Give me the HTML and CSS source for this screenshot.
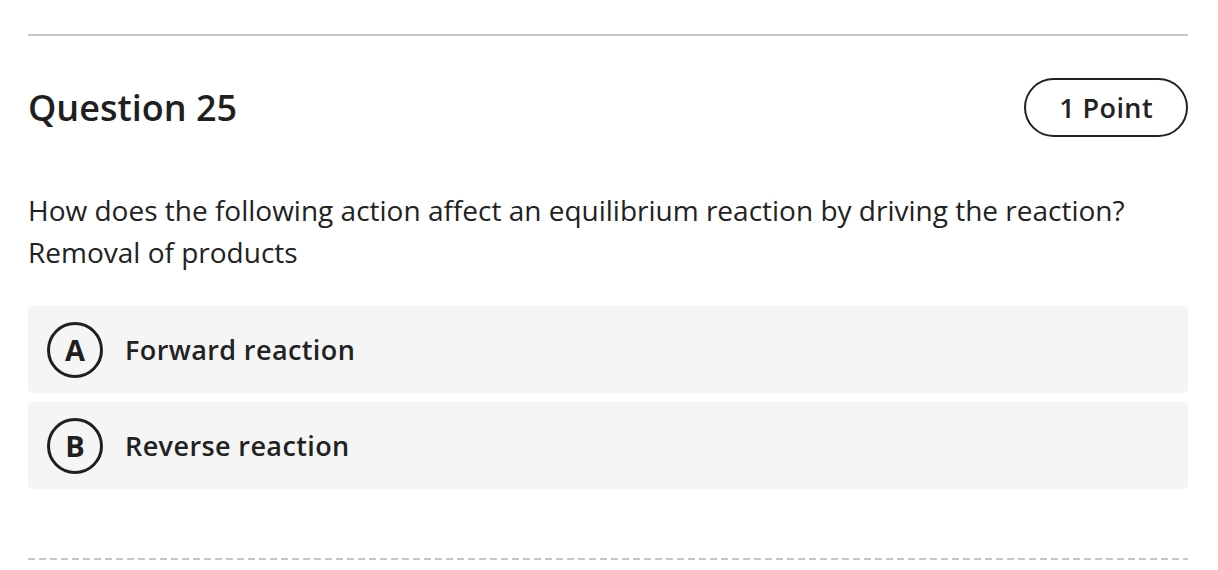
FILE: index.html
```html
<!DOCTYPE html>
<html lang="en">
<head>
<meta charset="utf-8">
<title>Question 25</title>
<link rel="stylesheet" href="styles.css">
</head>
<body>
<main class="page">
  <hr class="top-rule">
  <header class="q-head">
    <h1 class="q-title">Question 25</h1>
    <span class="q-points">1 Point</span>
  </header>
  <p class="q-text">How does the following action affect an equilibrium reaction by driving the reaction?<br>Removal of products</p>
  <ul class="options">
    <li class="option"><span class="letter">A</span><span class="label">Forward reaction</span></li>
    <li class="option"><span class="letter">B</span><span class="label">Reverse reaction</span></li>
  </ul>
  <div class="bottom-rule"></div>
</main>
</body>
</html>
```

FILE: styles.css
```css
* { box-sizing: border-box; }
html, body { margin: 0; padding: 0; background: #ffffff; }
body {
  font-family: "Open Sans", "Liberation Sans", sans-serif;
  color: #1f1f1f;
}
.page {
  padding: 34px 30px 0 28px;
}
.top-rule {
  margin: 0;
  border: 0;
  height: 2px;
  background: #c6c6c6;
}
.q-head {
  margin-top: 42px;
  display: flex;
  align-items: center;
  justify-content: space-between;
  height: 59px;
}
.q-title {
  margin: 0;
  font-size: 36px;
  font-weight: 600;
  line-height: 49px;
  color: #1f1f1f;
}
.q-points {
  display: flex;
  align-items: center;
  height: 59px;
  padding: 0 33px;
  border: 2px solid #222;
  border-radius: 30px;
  font-size: 27px;
  font-weight: 600;
  letter-spacing: 0.4px;
  color: #222;
}
.q-text {
  margin: 52px 0 0;
  font-size: 28px;
  line-height: 42px;
  font-weight: 400;
  color: #222;
}
.options {
  list-style: none;
  margin: 33px 0 0;
  padding: 0;
  display: flex;
  flex-direction: column;
  gap: 9px;
}
.option {
  display: flex;
  align-items: center;
  height: 87px;
  padding-left: 19px;
  background: #f5f5f5;
  border-radius: 5px;
}
.letter {
  width: 56px;
  height: 56px;
  border: 3px solid #1f1f1f;
  border-radius: 50%;
  display: flex;
  align-items: center;
  justify-content: center;
  font-size: 29px;
  font-weight: 700;
  color: #1f1f1f;
  flex: none;
}
.label {
  margin-left: 22px;
  font-size: 27px;
  font-weight: 600;
  letter-spacing: 0.4px;
  color: #222;
}
.bottom-rule {
  margin-top: 69px;
  height: 2px;
  background: repeating-linear-gradient(to right, #c6c6c6 0 7px, transparent 7px 11px);
}
```
